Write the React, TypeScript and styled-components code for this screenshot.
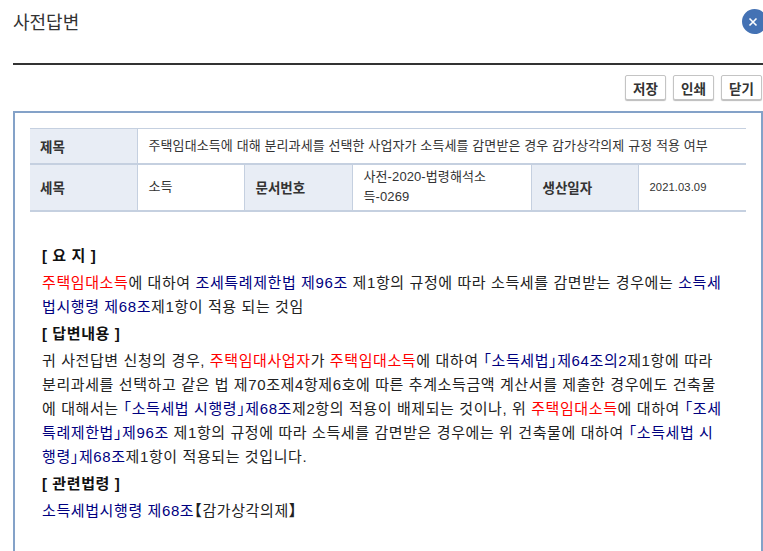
import React from "react";
import styled, { createGlobalStyle } from "styled-components";

const GlobalStyle = createGlobalStyle`
  html, body {
    margin: 0;
    padding: 0;
    height: 100%;
    overflow: hidden;
    background: #fff;
    font-family: "Liberation Sans", "Noto Sans CJK KR", sans-serif;
  }
`;

type Tone = "red" | "blue";

function Mark({ tone, children }: { tone: Tone; children: React.ReactNode }) {
  return <Colored $tone={tone}>{children}</Colored>;
}

export default function App() {
  return (
    <Page>
      <GlobalStyle />
      <Header>
        <Title>사전답변</Title>
        <CloseButton aria-label="닫기">
          <svg width="10" height="10" viewBox="0 0 10 10">
            <path d="M1.5 1.5 L8.5 8.5 M8.5 1.5 L1.5 8.5" stroke="#fff" strokeWidth="1.6" />
          </svg>
        </CloseButton>
      </Header>
      <Toolbar>
        <ToolButton>저장</ToolButton>
        <ToolButton>인쇄</ToolButton>
        <ToolButton>닫기</ToolButton>
      </Toolbar>
      <Panel>
        <InfoTable>
          <colgroup>
            <col style={{ width: 107 }} />
            <col style={{ width: 107 }} />
            <col style={{ width: 108 }} />
            <col style={{ width: 179 }} />
            <col style={{ width: 107 }} />
            <col />
          </colgroup>
          <tbody>
            <TitleRow>
              <HeadCell>제목</HeadCell>
              <ValueCell colSpan={5}>
                주택임대소득에 대해 분리과세를 선택한 사업자가 소득세를 감면받은 경우 감가상각의제 규정 적용 여부
              </ValueCell>
            </TitleRow>
            <InfoRow>
              <HeadCell>세목</HeadCell>
              <ValueCell>소득</ValueCell>
              <HeadCell>문서번호</HeadCell>
              <ValueCell>
                사전-2020-법령해석소
                <br />
                득-0269
              </ValueCell>
              <HeadCell>생산일자</HeadCell>
              <ValueCell $numeric>2021.03.09</ValueCell>
            </InfoRow>
          </tbody>
        </InfoTable>
        <Body>
          <SectionTitle>[ 요 지 ]</SectionTitle>
          <Paragraph>
            <Mark tone="red">주택임대소득</Mark>에 대하여 <Mark tone="blue">조세특례제한법 제96조</Mark> 제1항의 규정에 따라 소득세를 감면받는 경우에는 <Mark tone="blue">소득세</Mark>
            <br />
            <Mark tone="blue">법시행령 제68조</Mark>제1항이 적용 되는 것임
          </Paragraph>
          <SectionTitle>[ 답변내용 ]</SectionTitle>
          <Paragraph>
            귀 사전답변 신청의 경우, <Mark tone="red">주택임대사업자</Mark>가 <Mark tone="red">주택임대소득</Mark>에 대하여{" "}
            <Mark tone="blue">「소득세법」제64조의2</Mark>제1항에 따라
            <br />
            분리과세를 선택하고 같은 법 제70조제4항제6호에 따른 추계소득금액 계산서를 제출한 경우에도 건축물
            <br />
            에 대해서는 <Mark tone="blue">「소득세법 시행령」제68조</Mark>제2항의 적용이 배제되는 것이나, 위 <Mark tone="red">주택임대소득</Mark>에 대하여 <Mark tone="blue">「조세</Mark>
            <br />
            <Mark tone="blue">특례제한법」제96조</Mark> 제1항의 규정에 따라 소득세를 감면받은 경우에는 위 건축물에 대하여 <Mark tone="blue">「소득세법 시</Mark>
            <br />
            <Mark tone="blue">행령」제68조</Mark>제1항이 적용되는 것입니다.
          </Paragraph>
          <SectionTitle>[ 관련법령 ]</SectionTitle>
          <Paragraph>
            <Mark tone="blue">소득세법시행령 제68조</Mark>
            <strong>【</strong>감가상각의제<strong>】</strong>
          </Paragraph>
        </Body>
      </Panel>
    </Page>
  );
}

const Page = styled.div`
  width: 763px;
  height: 551px;
  overflow: hidden;
  position: relative;
  box-sizing: border-box;
  padding-left: 13px;
`;

const Header = styled.header`
  height: 63px;
  border-bottom: 2px solid #333;
  display: flex;
  align-items: flex-start;
`;

const Title = styled.h1`
  margin: 12px 0 0;
  font-size: 18px;
  line-height: 22px;
  font-weight: 400;
  color: #333;
`;

const CloseButton = styled.button`
  position: absolute;
  top: 9px;
  left: 742px;
  width: 25px;
  height: 25px;
  padding: 0 3px 0 0;
  border: 0;
  border-radius: 50%;
  background: #4472b4;
  display: flex;
  align-items: center;
  justify-content: center;
`;

const Toolbar = styled.div`
  display: flex;
  justify-content: flex-end;
  gap: 7px;
  padding: 10px 1px 0 0;
  height: 36px;
`;

const ToolButton = styled.button`
  width: 41px;
  height: 25px;
  padding: 0;
  box-sizing: border-box;
  border: 1px solid #c4c4c4;
  border-radius: 2px;
  background: #fff;
  box-shadow: 0 1px 1px #bbb;
  font-family: inherit;
  font-size: 13.5px;
  font-weight: 700;
  color: #333;
`;

const Panel = styled.section`
  box-sizing: border-box;
  width: 750px;
  min-height: 600px;
  border: 2px solid #84a2c8;
  padding: 15px 15px 0;
`;

const InfoTable = styled.table`
  width: 716px;
  table-layout: fixed;
  border-collapse: collapse;
  font-size: 13px;
  color: #333;
  border-top: 1px solid #c5d0e0;
  border-bottom: 2px solid #c5d0e0;
`;

const TitleRow = styled.tr`
  height: 35px;
`;

const InfoRow = styled.tr`
  height: 47px;
  border-top: 2px solid #c5d0e0;
`;

const HeadCell = styled.th`
  background: #e8edf5;
  padding: 0 10px 0 11px;
  text-align: left;
  font-weight: 700;
  font-size: 13.5px;
  color: #333;
  border-right: 1px solid #c5d0e0;

  &:first-child {
    padding-left: 10px;
  }
`;

const ValueCell = styled.td<{ $numeric?: boolean }>`
  padding: 0 11px;
  line-height: 20px;
  letter-spacing: 0.1px;
  font-size: ${(props) => (props.$numeric ? "11.2px" : "13px")};
  border-right: 1px solid #c5d0e0;

  &:last-child {
    border-right: 0;
  }
`;

const Body = styled.div`
  padding: 29px 0 0 12px;
  font-size: 15px;
  letter-spacing: 0.6px;
  font-feature-settings: "halt";
  color: #222;
  white-space: nowrap;
`;

const SectionTitle = styled.h2`
  margin: 0;
  font-size: 15px;
  line-height: 30px;
  font-weight: 700;
  color: #111;
`;

const Paragraph = styled.p`
  margin: 0;
  line-height: 24px;
`;

const Colored = styled.span<{ $tone: Tone }>`
  color: ${(props) => (props.$tone === "red" ? "#f00" : "#00007f")};
`;
